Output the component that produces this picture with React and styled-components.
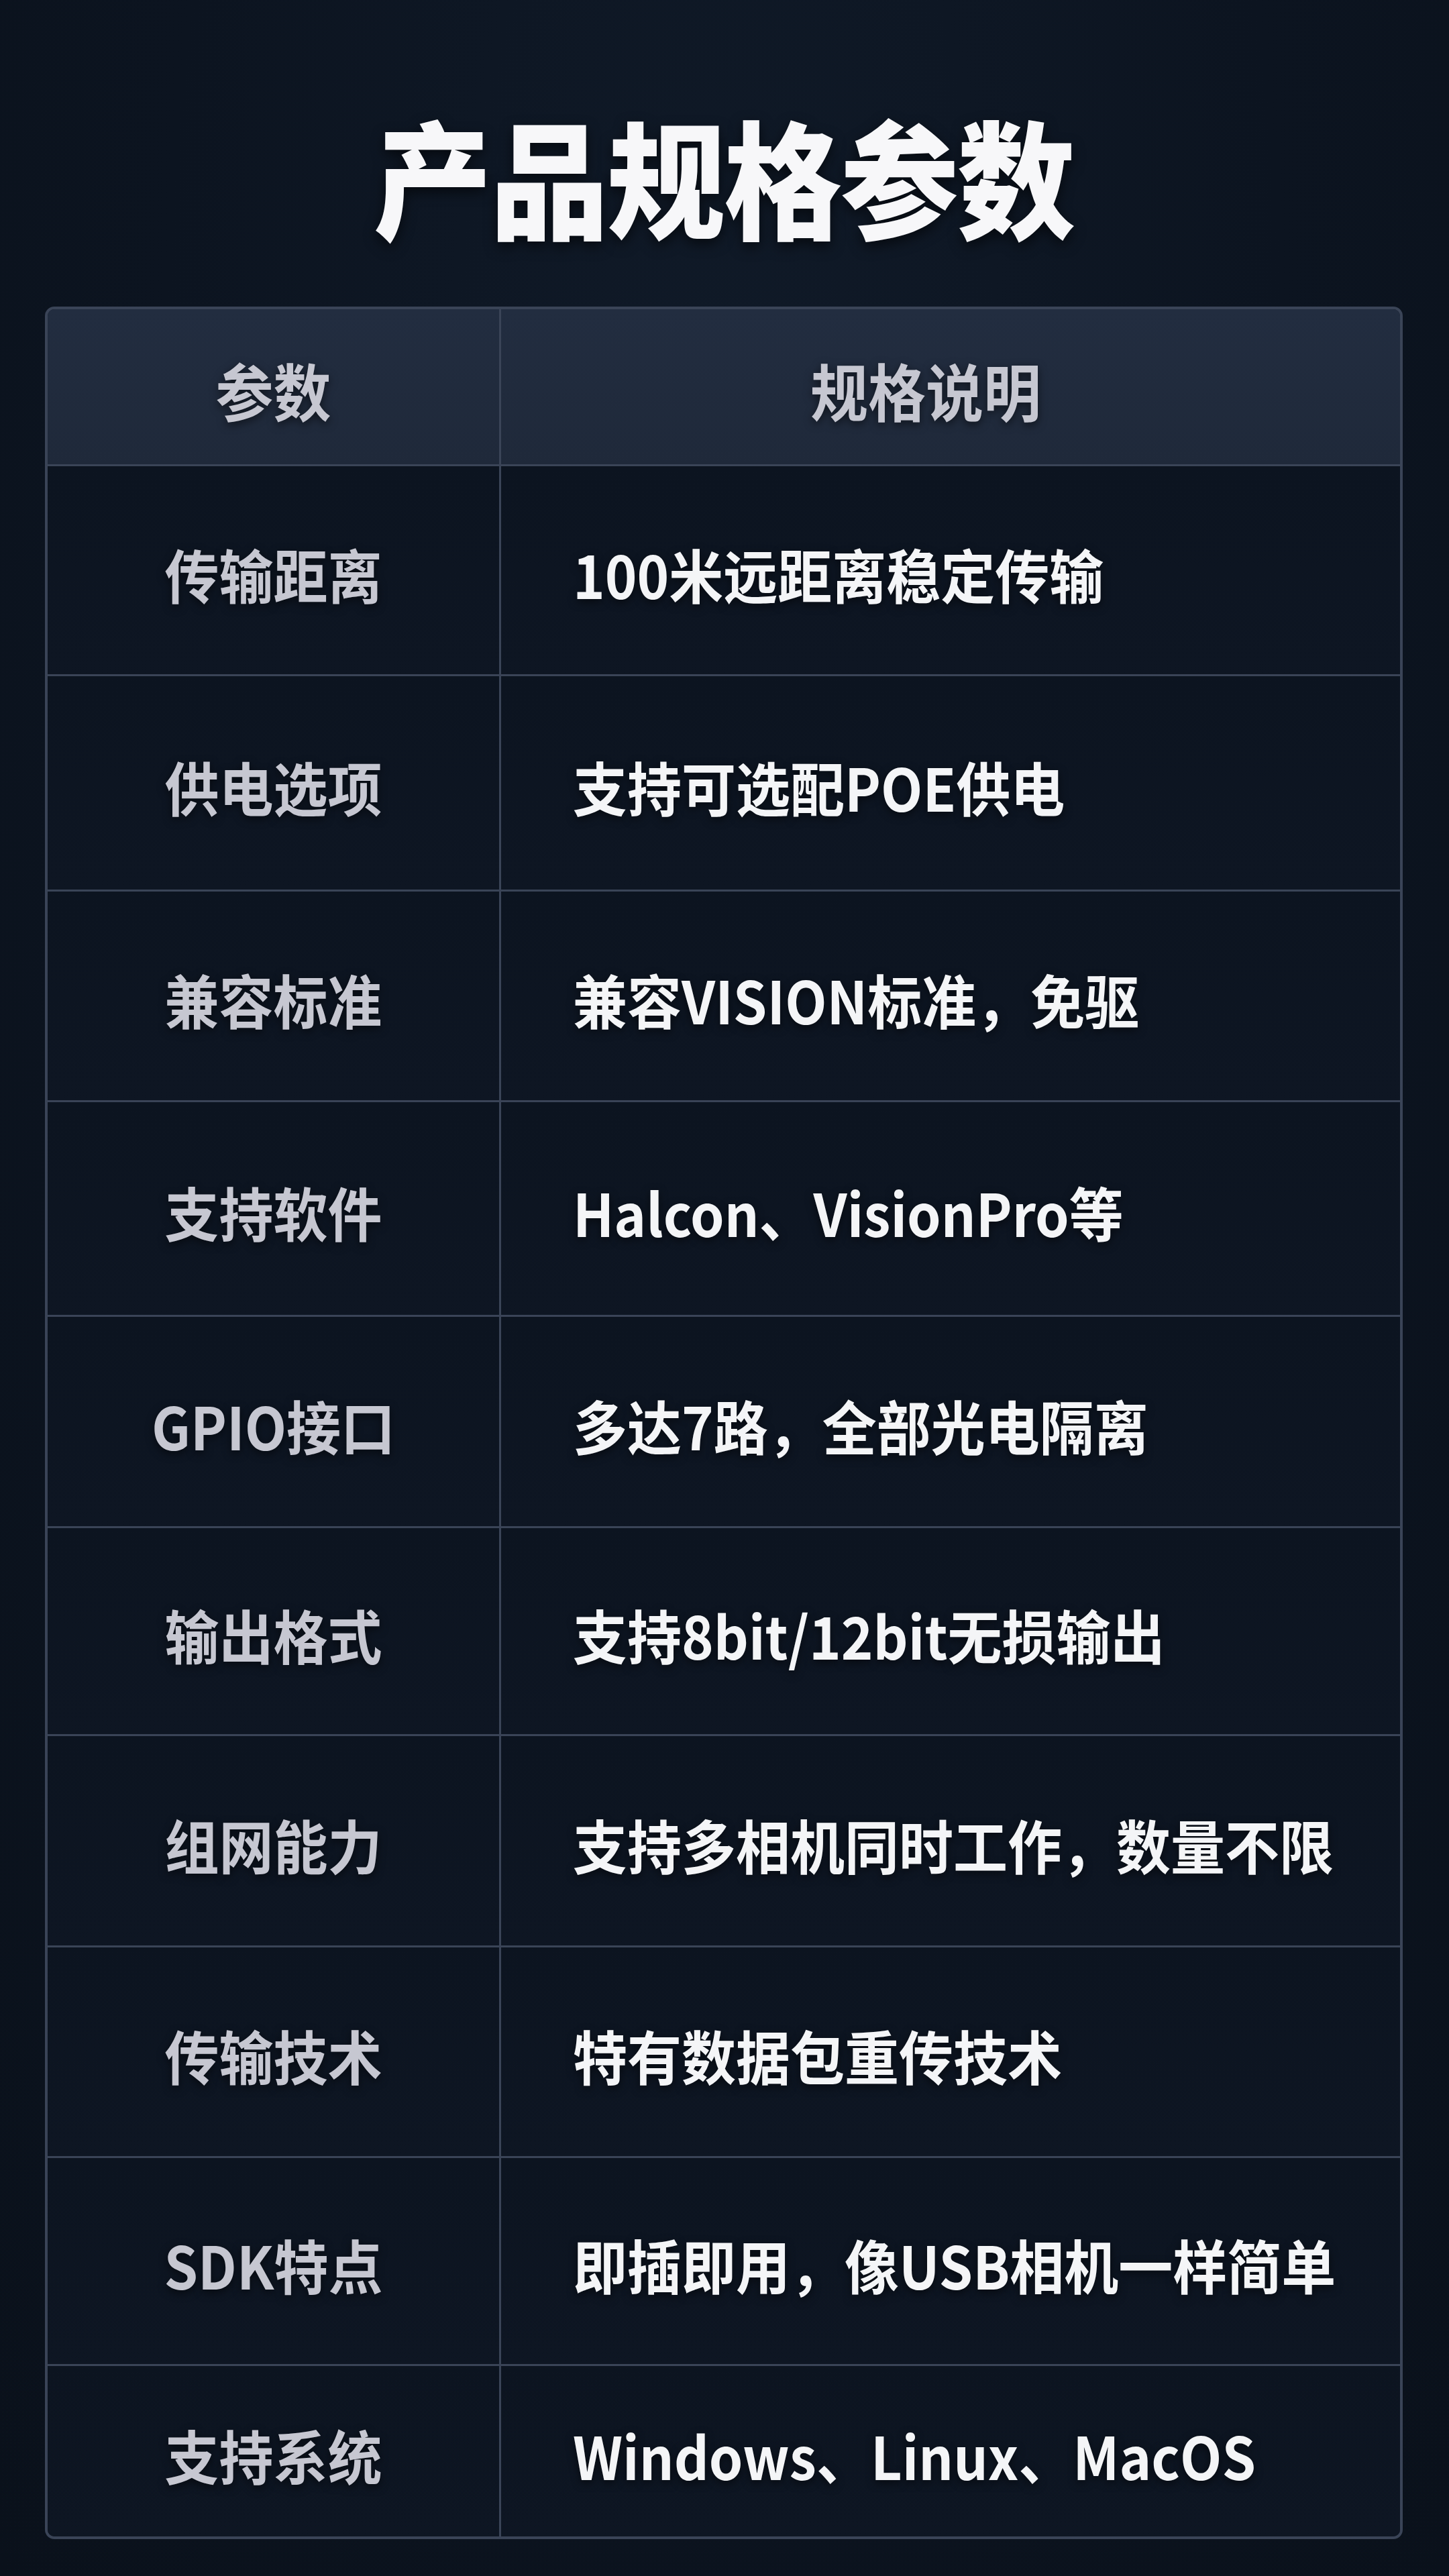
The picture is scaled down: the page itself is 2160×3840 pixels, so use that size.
import styled, { createGlobalStyle } from "styled-components";

const GlobalStyle = createGlobalStyle`
  html, body {
    margin: 0;
    padding: 0;
    background: #0b121d;
  }
  body {
    font-family: "Noto Sans CJK SC", "Noto Sans", sans-serif;
  }
`;

const Page = styled.div`
  width: 2160px;
  min-height: 3840px;
  box-sizing: border-box;
  padding: 172px 69px 0 67px;
  background: radial-gradient(
      ellipse at 50% 20%,
      #101a28 0%,
      #0c1420 55%,
      #0a111b 100%
    );
`;

const Title = styled.h1`
  margin: 0 0 109px;
  text-align: center;
  font-size: 176px;
  line-height: 176px;
  font-weight: 900;
  color: #f7f7f9;
  letter-spacing: -2px;
  text-shadow: 0 6px 18px rgba(0, 0, 0, 0.6);
  transform: scaleY(1.08);
`;

const Table = styled.div`
  border: 4px solid #3a4457;
  border-radius: 14px;
  overflow: hidden;
  background: #0d1522;
`;

const Row = styled.div`
  display: grid;
  grid-template-columns: 673px 1fr;
  height: ${(p) => p.$h}px;
  box-sizing: border-box;
  border-top: ${(p) => (p.$first ? "none" : "3px solid #3a4457")};
  background: ${(p) =>
    p.$head
      ? "linear-gradient(180deg, #222d40 0%, #1f293a 100%)"
      : "linear-gradient(180deg, #0c1420 0%, #0e1623 100%)"};
`;

const Cell = styled.div`
  display: flex;
  align-items: center;
  justify-content: ${(p) => (p.$left ? "flex-start" : "center")};
  box-sizing: border-box;
  padding: ${(p) => (p.$left ? "8px 0 0 107px" : "8px 0 0")};
  padding-right: ${(p) => (p.$shift ? "74px" : "0")};
  border-left: ${(p) => (p.$divider ? "3px solid #3a4457" : "none")};
`;

const Text = styled.span`
  display: inline-block;
  font-size: ${(p) => (p.$head ? 86 : 81)}px;
  line-height: 1;
  font-weight: 700;
  white-space: nowrap;
  color: ${(p) => (p.$bright ? "#f4f5f7" : "#c6c7d1")};
  text-shadow: 0 4px 12px rgba(0, 0, 0, 0.55);
  transform: scaleY(1.08);
`;

const specs = [
  ["传输距离", "100米远距离稳定传输", 313],
  ["供电选项", "支持可选配POE供电", 321],
  ["兼容标准", "兼容VISION标准，免驱", 314],
  ["支持软件", "Halcon、VisionPro等", 320],
  ["GPIO接口", "多达7路，全部光电隔离", 315],
  ["输出格式", "支持8bit/12bit无损输出", 310],
  ["组网能力", "支持多相机同时工作，数量不限", 315],
  ["传输技术", "特有数据包重传技术", 314],
  ["SDK特点", "即插即用，像USB相机一样简单", 310],
  ["支持系统", "Windows、Linux、MacOS", 257],
];

function App() {
  return (
    <>
      <GlobalStyle />
      <Page>
        <Title>产品规格参数</Title>
        <Table>
          <Row $head $first $h={231}>
            <Cell>
              <Text $head>参数</Text>
            </Cell>
            <Cell $divider $shift>
              <Text $head>规格说明</Text>
            </Cell>
          </Row>
          {specs.map(([name, value, h]) => (
            <Row key={name} $h={h}>
              <Cell>
                <Text>{name}</Text>
              </Cell>
              <Cell $divider $left>
                <Text $bright>{value}</Text>
              </Cell>
            </Row>
          ))}
        </Table>
      </Page>
    </>
  );
}

export default App;
